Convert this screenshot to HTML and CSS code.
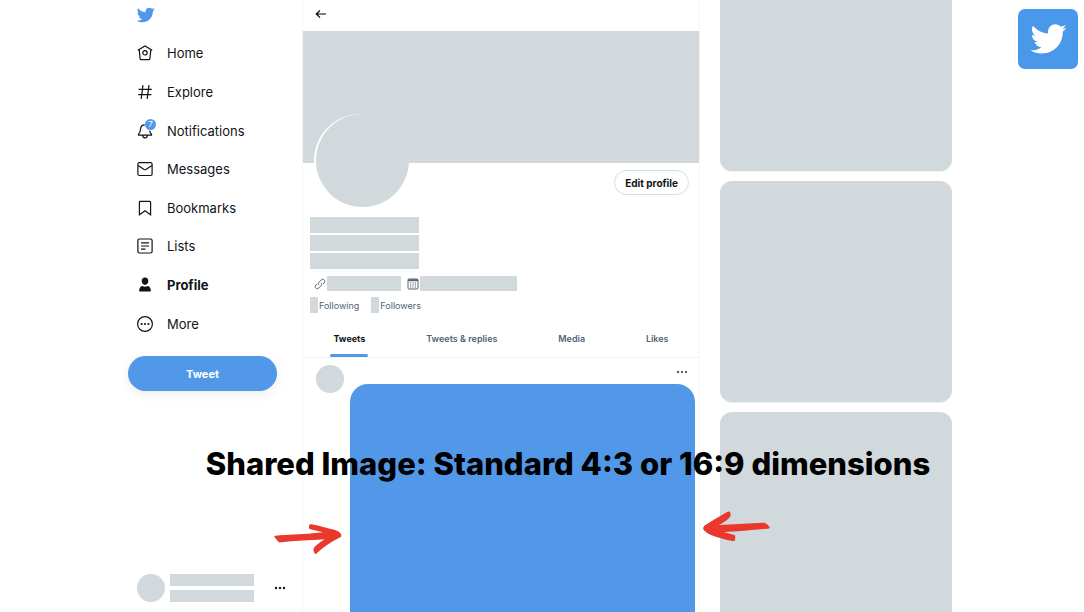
FILE: index.html
```html
<!DOCTYPE html>
<html lang="en">
<head>
    <meta charset="UTF-8">
    <meta name="viewport" content="width=device-width, initial-scale=1.0">
    <title>Twitter Image Sizes</title>
    <link rel="stylesheet" href="styles.css">
</head>
<body>
    <div class="page">
        <!-- Left menu -->
        <header class="sidebar">
            <a href="#" class="logo" aria-label="Twitter">
                <svg viewBox="0 0 24 24"><path id="bird" d="M23.643 4.937c-.835.37-1.732.62-2.675.733.962-.576 1.7-1.49 2.048-2.578-.9.534-1.897.922-2.958 1.13-.85-.904-2.06-1.47-3.4-1.47-2.572 0-4.658 2.086-4.658 4.66 0 .364.042.718.12 1.06-3.873-.195-7.304-2.05-9.602-4.868-.4.69-.63 1.49-.63 2.342 0 1.616.823 3.043 2.072 3.878-.764-.025-1.482-.234-2.11-.583v.06c0 2.257 1.605 4.14 3.737 4.568-.392.106-.803.162-1.227.162-.3 0-.593-.028-.877-.082.593 1.85 2.313 3.198 4.352 3.234-1.595 1.25-3.604 1.995-5.786 1.995-.376 0-.747-.022-1.112-.065 2.062 1.323 4.51 2.093 7.14 2.093 8.57 0 13.255-7.098 13.255-13.254 0-.2-.005-.402-.014-.602.91-.658 1.7-1.477 2.323-2.41z"/></svg>
            </a>
            <nav class="menu">
                <a href="#">
                    <svg viewBox="0 0 18 18"><path d="M1.8 6.2 9 2l7.2 4.2M3.2 5.6l.9 9c.1.7.5 1.1 1.2 1.1h7.4c.7 0 1.1-.4 1.2-1.1l.9-9"/><circle cx="9" cy="8.8" r="2.2"/></svg>
                    Home
                </a>
                <a href="#">
                    <svg viewBox="0 0 18 18"><path d="M7 2.2 5.2 15.8M13 2.2l-1.8 13.6M2.6 6.4h13.2M2.2 11.6h13.2"/></svg>
                    Explore
                </a>
                <a href="#">
                    <span class="bell">
                        <svg viewBox="0 0 18 18"><path d="M8.8 2.8C6 2.8 4.6 4.8 4.5 7.2c-.1 2.5-.7 3.7-2 5.2-.3.4-.1.8.4.8h12.2c.5 0 .7-.4.4-.8-1-1.2-1.6-2.2-1.9-3.8M6.6 13.4c.2 1.7 1.1 2.5 2.4 2.5s2.2-.8 2.4-2.5"/></svg>
                        <span class="count">7</span>
                    </span>
                    Notifications
                </a>
                <a href="#">
                    <svg viewBox="0 0 18 18"><rect x="1.9" y="2.7" width="14.2" height="12.8" rx="1.5"/><path d="m2 5.5 6.2 4c.5.3 1.1.3 1.6 0l6.2-4"/></svg>
                    Messages
                </a>
                <a href="#">
                    <svg viewBox="0 0 18 18"><path d="M3.4 3.2c0-.6.3-.9.9-.9h9.4c.6 0 .9.3.9.9v12.6L9 11.8l-5.600 4z"/></svg>
                    Bookmarks
                </a>
                <a href="#">
                    <svg viewBox="0 0 18 18"><rect x="1.9" y="2" width="14.2" height="14" rx="1.5"/><path d="M5 5.8h8M5 9h8M5 12.2h4.5"/></svg>
                    Lists
                </a>
                <a href="#" class="current">
                    <svg class="solid" viewBox="0 0 18 18"><path d="M9 1.6c2.100 0 3.300 1.400 3.300 3.500S11 9 9 9 5.700 7.200 5.700 5.100 6.900 1.600 9 1.600zM6.200 9.900c1.700 1 3.900 1 5.600 0 1.900.6 2.900 2.100 3.100 4.700 0 .6-.3.9-.9.9H4c-.6 0-.9-.3-.9-.9.200-2.600 1.200-4.100 3.100-4.700z"/></svg>
                    Profile
                </a>
                <a href="#">
                    <svg viewBox="0 0 18 18"><circle cx="9" cy="9" r="7.4"/><g class="dots"><circle cx="5.6" cy="9" r="1.1"/><circle cx="9" cy="9" r="1.1"/><circle cx="12.4" cy="9" r="1.1"/></g></svg>
                    More
                </a>
            </nav>
            <button class="tweet-btn">Tweet</button>
            <div class="account">
                <div class="avatar-small"></div>
                <div class="account-lines">
                    <div class="block"></div>
                    <div class="block"></div>
                </div>
                <button class="more-btn dark" aria-label="Account menu">
                    <svg viewBox="0 0 12 4"><circle cx="2" cy="2" r="1.2"/><circle cx="6" cy="2" r="1.2"/><circle cx="10" cy="2" r="1.2"/></svg>
                </button>
            </div>
        </header>

        <!-- Profile column -->
        <main class="profile">
            <div class="topbar">
                <button class="back" aria-label="Back">
                    <svg viewBox="0 0 12 12"><path d="M11 6H1.5M5 2.300 1.300 6 5 9.700"/></svg>
                </button>
            </div>
            <div class="banner"></div>
            <div class="profile-head">
                <div class="avatar"></div>
                <button class="edit">Edit profile</button>
            </div>
            <div class="bio">
                <div class="block"></div>
                <div class="block"></div>
                <div class="block"></div>
            </div>
            <div class="meta">
                <svg viewBox="0 0 12 12"><path d="M5 7.2C4 6.1 4.2 5 5.1 4.1l2-2c1-1 2.3-1 3.1-.2.9.9.8 2.1-.1 3.1L8.900 6.200M7 4.800c1 1.1.8 2.2-.1 3.1l-2 2c-1 1-2.300 1-3.100.2-.9-.9-.8-2.100.1-3.100l1.200-1.200"/></svg>
                <div class="block site"></div>
                <svg viewBox="0 0 12 12"><rect x="1" y="1" width="10" height="10" rx="1"/><path d="M1 2.200h10" stroke-width="2"/><path d="M3 5h1.200m1.200 0h1.200m1.200 0H9M3 7h1.200m1.200 0h1.200m1.200 0H9M3 9h1.200m1.200 0h1.200m1.200 0H9" stroke-width="1.200"/></svg>
                <div class="block joined"></div>
            </div>
            <div class="follows">
                <a href="#"><span class="block"></span>Following</a>
                <a href="#"><span class="block"></span>Followers</a>
            </div>
            <nav class="tabs">
                <a href="#" class="active">Tweets</a>
                <a href="#">Tweets &amp; replies</a>
                <a href="#">Media</a>
                <a href="#">Likes</a>
            </nav>
            <article class="tweet">
                <div class="avatar-small"></div>
                <div class="tweet-body">
                    <button class="more-btn" aria-label="Tweet menu">
                        <svg viewBox="0 0 12 4"><circle cx="2" cy="2" r="1.2"/><circle cx="6" cy="2" r="1.2"/><circle cx="10" cy="2" r="1.2"/></svg>
                    </button>
                    <div class="shared-image"></div>
                </div>
            </article>

            <!-- hand drawn arrows pointing at the image edges -->
            <svg class="arrow arrow-left" viewBox="0 0 204 93"><path d="M1 39c-1-2 1-4 5-4 30-3 75-3 110-7l31-3-38-9c-6-2-4-9-3-13 1-2 4-2 7-2 25 5 47 12 68 16 8 2 15 6 20 13 2 4 1 8-2 10-26 12-48 28-70 47-3 3-5 4-7 1-4-6-5-13-1-18 9-10 20-17 31-24-45 4-88 4-132 9-3 0-5 0-7-2z"/></svg>
            <svg class="arrow arrow-right" viewBox="0 0 204 93"><path d="M2 57c-3-4-1-10 4-14C29 27 51 15 74 2c4-2 6 0 8 3 2 6 1 11-3 15-9 9-20 16-31 22l132-7c5 0 8 1 11 4 3 3 9 8 9 11-1 2-3 3-6 3-43 3-85 8-132 10l32 9c4 1 3 7 2 12 0 5-2 7-7 6-22-4-43-9-65-18-9-4-16-9-22-15z"/></svg>
        </main>

        <!-- Right cards -->
        <aside class="cards">
            <div class="card card-first"></div>
            <div class="card"></div>
            <div class="card"></div>
        </aside>

        <h1 class="caption">Shared Image: Standard 4:3 or 16:9 dimensions</h1>
        <div class="badge">
            <svg viewBox="0 0 24 24"><use href="#bird"/></svg>
        </div>
    </div>
</body>
</html>
```
FILE: styles.css
```css
* {
    box-sizing: border-box;
}
body {
    margin: 0;
    background: #fff;
    color: #0f1419;
    font-family: Inter, "Liberation Sans", sans-serif;
}
a {
    color: inherit;
    text-decoration: none;
}
button {
    padding: 0;
    border: none;
    background: none;
    font-family: inherit;
    cursor: pointer;
}
svg {
    display: block;
    fill: none;
    stroke: currentColor;
}
.page {
    position: relative;
    display: grid;
    grid-template-columns: 175fr 397fr 252fr;
    height: 100vh;
    padding: 0 132px 0 128px;
    overflow: hidden;
}
.block {
    background: #d1d9dc;
}
.avatar-small {
    flex: none;
    width: 28px;
    height: 28px;
    border-radius: 50%;
    background: #d1d9dc;
}

/* Left menu */
.sidebar {
    display: flex;
    flex-direction: column;
    height: 100vh;
    padding-bottom: 10px;
}
.logo {
    width: 20px;
    margin: 5px 0 9px 8px;
}
.logo svg {
    width: 19px;
    height: 20px;
    fill: #5298e9;
    stroke: none;
}
.menu {
    display: grid;
    grid-auto-rows: 1fr;
    height: 309px;
    padding-left: 8px;
}
.menu a {
    display: flex;
    align-items: center;
    gap: 13px;
    font-size: 13px;
}
.menu svg {
    width: 18px;
    height: 18px;
    stroke-width: 1.2;
}
.menu .solid,
.menu .dots {
    fill: currentColor;
    stroke: none;
}
.menu .current {
    font-weight: 700;
}
.bell {
    position: relative;
}
.count {
    position: absolute;
    top: -3px;
    right: -2px;
    width: 11px;
    border-radius: 50%;
    background: #5298e9;
    color: #fff;
    font-size: 8px;
    line-height: 11px;
    text-align: center;
}
.tweet-btn {
    height: 35px;
    margin: 13px 26px 0 0;
    border-radius: 18px;
    background: #5298e9;
    box-shadow: 0 3px 12px rgba(0, 0, 0, 0.08);
    color: #fff;
    font-size: 11px;
    font-weight: 700;
}
.account {
    display: flex;
    align-items: center;
    gap: 5px;
    margin-top: auto;
    padding: 0 17px 0 9px;
}
.account-lines {
    display: grid;
    flex: 1;
    gap: 4px;
    max-width: 84px;
}
.account-lines .block {
    height: 12px;
}
.more-btn {
    color: #536471;
}
.more-btn svg {
    width: 12px;
    height: 4px;
    fill: currentColor;
    stroke: none;
}
.more-btn.dark {
    margin-left: auto;
    color: #0f1419;
}

/* Profile column */
.profile {
    position: relative;
    margin-left: -1px;
    border: solid #f3f5f6;
    border-width: 0 1px;
}
.topbar {
    display: flex;
    align-items: center;
    height: 31px;
    padding: 0 12px 4px;
}
.back svg {
    width: 12px;
    height: 12px;
    stroke-width: 1.2;
}
.banner {
    height: 132px;
    background: #d1d9dc;
}
.profile-head {
    display: flex;
    justify-content: space-between;
    align-items: flex-start;
    padding: 0 10px 0 13px;
}
.avatar {
    width: 93px;
    height: 93px;
    margin-top: -49px;
    border-radius: 50%;
    background: #d1d9dc;
    box-shadow: -2px 0 0 #fff;
}
.edit {
    height: 25px;
    margin-top: 7px;
    padding: 0 10px;
    border: 1px solid #d5dde1;
    border-radius: 13px;
    color: #0f1419;
    font-size: 10px;
    font-weight: 700;
}
.bio {
    display: grid;
    gap: 2px;
    width: 109px;
    margin: 10px 0 0 7px;
}
.bio .block {
    height: 16px;
}
.meta {
    display: flex;
    align-items: center;
    margin: 7px 0 0 11px;
    color: #536471;
}
.meta svg {
    width: 12px;
    height: 12px;
    margin-right: 1px;
}
.meta .block {
    height: 15px;
}
.meta .site {
    width: 74px;
    margin-right: 6px;
}
.meta .joined {
    width: 97px;
}
.follows {
    display: flex;
    gap: 12px;
    margin: 6px 0 0 7px;
    color: #536471;
    font-size: 9px;
}
.follows a {
    display: flex;
    align-items: center;
    gap: 1px;
}
.follows .block {
    width: 8px;
    height: 16px;
}
.tabs {
    display: flex;
    justify-content: space-around;
    height: 45px;
    border-bottom: 1px solid #eff3f4;
    color: #536471;
    font-size: 9px;
    font-weight: 600;
    line-height: 52px;
}
.tabs .active {
    position: relative;
    color: #0f1419;
    font-weight: 700;
}
.tabs .active::after {
    content: "";
    position: absolute;
    right: -3px;
    bottom: 0;
    left: -3px;
    height: 3px;
    border-radius: 2px;
    background: #5298e9;
}
.tweet {
    display: flex;
    gap: 6px;
    padding: 7px 4px 0 13px;
}
.tweet-body {
    flex: 1;
}
.tweet-body .more-btn {
    display: block;
    margin: 5px 7px 10px auto;
}
.shared-image {
    aspect-ratio: 4 / 3;
    border-radius: 18px;
    background: #5298e9;
}

/* Right cards */
.cards {
    padding-left: 20px;
}
.card {
    height: 221px;
    margin-bottom: 10px;
    border-radius: 12px;
    background: #d1d9dc;
    box-shadow: 0 1px 1px #eef1f2;
}
.card-first {
    height: 171px;
    border-radius: 0 0 12px 12px;
}

/* Notes on top of the page */
.caption {
    position: absolute;
    top: 446px;
    right: 0;
    left: 52px;
    margin: 0;
    color: #000;
    font-size: 31px;
    font-weight: 800;
    line-height: 36px;
    text-align: center;
    white-space: nowrap;
}
.arrow {
    position: absolute;
    top: 524px;
    width: 68px;
    height: 31px;
    fill: #e9392c;
    stroke: none;
}
.arrow-left {
    left: -29px;
}
.arrow-right {
    top: 511px;
    right: -72px;
}
.badge {
    position: absolute;
    top: 9px;
    right: 6px;
    display: grid;
    place-items: center;
    width: 60px;
    height: 60px;
    border-radius: 7px;
    background: #4a98e9;
}
.badge svg {
    width: 38px;
    height: 38px;
    fill: #fff;
    stroke: none;
}
```
